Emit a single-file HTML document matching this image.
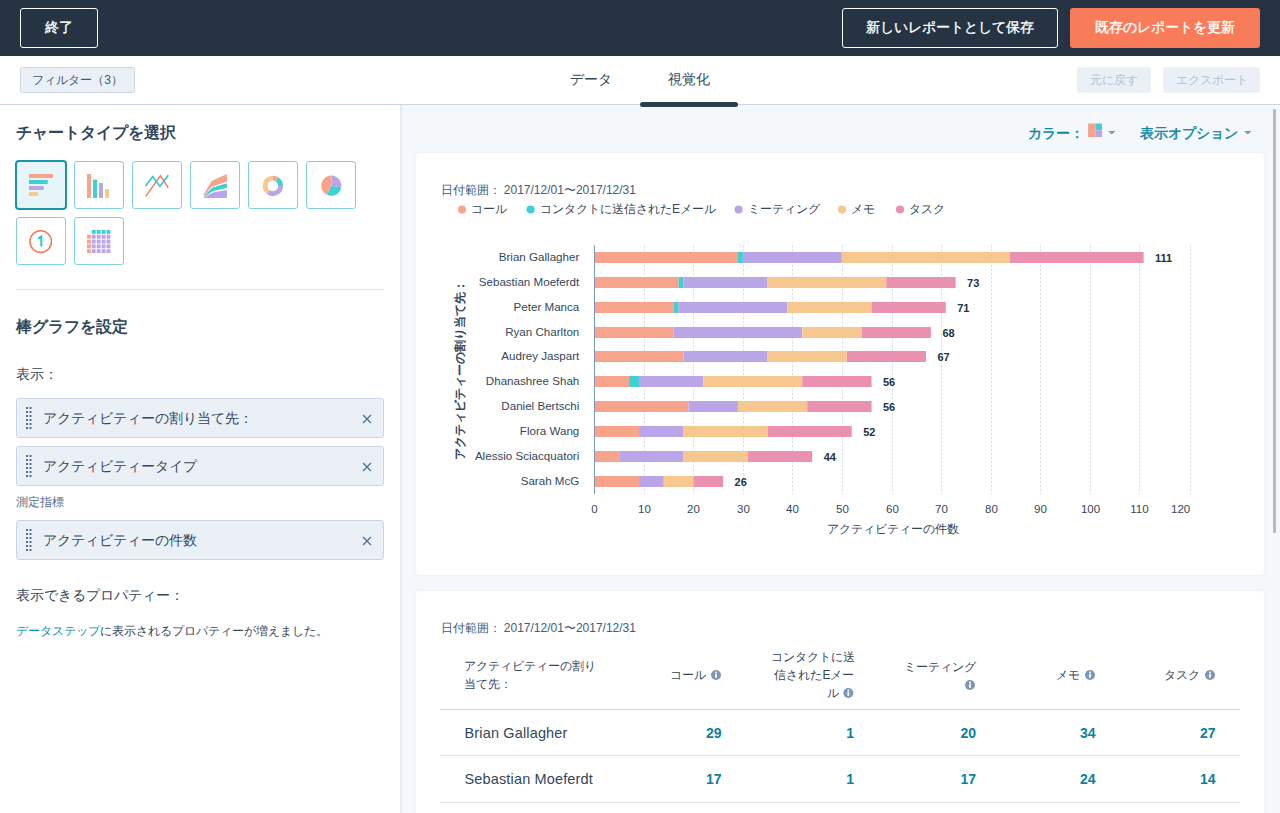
<!DOCTYPE html>
<html><head><meta charset="utf-8">
<style>
*{box-sizing:border-box;margin:0;padding:0}
html,body{width:1280px;height:813px;overflow:hidden;background:#f5f8fa;font-family:"Liberation Sans",sans-serif;color:#33475b}
.abs{position:absolute}
.t{position:absolute;white-space:nowrap;line-height:1}
#top{position:absolute;left:0;top:0;width:1280px;height:56px;background:#253342}
.btn{position:absolute;border-radius:3px;display:flex;align-items:center;justify-content:center;white-space:nowrap}
#sub{position:absolute;left:0;top:56px;width:1280px;height:49px;background:#fff;border-bottom:1px solid #cbd6e2}
#left{position:absolute;left:0;top:105px;width:400px;height:708px;background:#fff}
#lsh{position:absolute;left:400px;top:105px;width:3px;height:708px;background:linear-gradient(to right,#dfe5ec,#eef2f6 60%,#f5f8fa)}
.ct{position:absolute;width:50px;height:48px;border:1px solid #7fd1de;border-radius:3px;background:#fff}
.fld{position:absolute;left:16px;width:368px;height:40px;background:#eaf0f6;border:1px solid #cbd6e2;border-radius:3px}
.card{position:absolute;left:416px;width:848px;background:#fff;border-radius:4px;box-shadow:0 0 2px rgba(45,62,80,.08)}
</style></head><body>
<div id="top">
  <div class="btn" style="left:20px;top:8px;width:78px;height:40px;border:1px solid #fff;color:#fff;font-size:14px;-webkit-text-stroke:0.35px #fff">終了</div>
  <div class="btn" style="left:842px;top:8px;width:216px;height:40px;border:1px solid #fff;color:#fff;font-size:14px;-webkit-text-stroke:0.35px #fff">新しいレポートとして保存</div>
  <div class="btn" style="left:1070px;top:8px;width:190px;height:40px;background:#f87b5a;color:#fff;font-size:14px;-webkit-text-stroke:0.35px #fff">既存のレポートを更新</div>
</div>
<div id="sub">
  <div class="btn" style="left:20px;top:11px;width:115px;height:26px;background:#eaf0f6;border:1px solid #cbd6e2;color:#425b76;font-size:12px">フィルター（3）</div>
  <div class="t" style="left:550.5px;width:80px;text-align:center;top:16px;font-size:14px">データ</div>
  <div class="t" style="left:649px;width:80px;text-align:center;top:16px;font-size:14px">視覚化</div>
  <div class="abs" style="left:640px;top:46px;width:98px;height:5px;border-radius:3px;background:#2d3e50"></div>
  <div class="btn" style="left:1077px;top:11px;width:74px;height:26px;background:#eaf0f6;color:#b0c1d4;font-size:12px">元に戻す</div>
  <div class="btn" style="left:1163px;top:11px;width:97px;height:26px;background:#eaf0f6;color:#b0c1d4;font-size:12px">エクスポート</div>
</div>
<div id="lsh"></div>
<div id="left">
  <div class="t" style="left:16px;top:20px;font-size:16px;font-weight:bold">チャートタイプを選択</div>
  <!-- chart types -->
  <div class="ct" style="left:16px;top:56px;border:2px solid #1a93ad;border-radius:4px;background:#e5f5f8;left:15px;top:55px;width:52px;height:50px"></div>
  <div class="ct" style="left:74px;top:56px"></div>
  <div class="ct" style="left:132px;top:56px"></div>
  <div class="ct" style="left:190px;top:56px"></div>
  <div class="ct" style="left:248px;top:56px"></div>
  <div class="ct" style="left:306px;top:56px"></div>
  <div class="ct" style="left:16px;top:112px"></div>
  <div class="ct" style="left:74px;top:112px"></div>
  <div class="abs" style="left:16px;top:184px;width:368px;height:1px;background:#dfe3eb"></div>
  <div class="t" style="left:16px;top:214px;font-size:16px;font-weight:bold">棒グラフを設定</div>
  <div class="t" style="left:16px;top:262px;font-size:14px">表示：</div>
  <div class="fld" style="top:293px"><div class="t" style="left:26px;top:12px;font-size:14px">アクティビティーの割り当て先：</div></div>
  <div class="fld" style="top:341px"><div class="t" style="left:26px;top:12px;font-size:14px">アクティビティータイプ</div></div>
  <div class="t" style="left:16px;top:391px;font-size:12px;color:#516f90">測定指標</div>
  <div class="fld" style="top:415px"><div class="t" style="left:26px;top:12px;font-size:14px">アクティビティーの件数</div></div>
  <div class="t" style="left:16px;top:483px;font-size:14px">表示できるプロパティー：</div>
  <div class="t" style="left:16px;top:520px;font-size:12px"><span style="color:#0091ae">データステップ</span>に表示されるプロパティーが増えました。</div>
</div>
<svg class="abs" style="left:0;top:0;z-index:2" width="400" height="300"><rect x="29" y="174" width="24" height="4" fill="#f8a38b"/><rect x="29" y="180" width="18.7" height="4" fill="#3fd0d6"/><rect x="29" y="186" width="14.7" height="4" fill="#bba5e9"/><rect x="29" y="192" width="9" height="4" fill="#f6c78e"/><rect x="87" y="174" width="4" height="24" fill="#f8a38b"/><rect x="93" y="179.5" width="4" height="18.5" fill="#3fd0d6"/><rect x="99" y="183" width="4" height="15" fill="#bba5e9"/><rect x="105" y="189" width="4" height="9" fill="#f6c78e"/><polyline points="145.7,196.3 160.5,175.8 168.2,187.9" fill="none" stroke="#f5775a" stroke-width="1.4"/><polyline points="145.5,186 152.7,176.5 159.9,186.5 168.3,175.2" fill="none" stroke="#2fc6cf" stroke-width="1.6"/><path d="M203.5,194.5 L211.7,181 L226.9,174 L226.9,181.7 L212,186.6 L204,195.5 Z" fill="#f8a38b"/><path d="M204,196 L212.4,187.6 L226.9,183.3 L226.9,188 L213.1,191 L204,197 Z" fill="#3fd0d6"/><path d="M204,197.3 L213,192.5 L226.9,190 L226.9,198 L204,198 Z" fill="#bba5e9"/><g fill="none" stroke-width="4.8"><path d="M272.90,178.20 A7.7,7.7 0 0 1 276.98,179.37" stroke="#f8a38b"/><path d="M276.98,179.37 A7.7,7.7 0 0 1 280.60,185.90" stroke="#3fd0d6"/><path d="M280.60,185.90 A7.7,7.7 0 0 1 268.48,192.21" stroke="#bba5e9"/><path d="M268.48,192.21 A7.7,7.7 0 0 1 272.90,178.20" stroke="#f6c78e"/></g><path d="M331.3,185.7 L331.30,175.60 A10.1,10.1 0 0 1 341.25,187.45 Z" fill="#bba5e9"/><path d="M331.3,185.7 L341.25,187.45 A10.1,10.1 0 0 1 327.03,194.85 Z" fill="#3fd0d6"/><path d="M331.3,185.7 L327.03,194.85 A10.1,10.1 0 0 1 331.30,175.60 Z" fill="#f8a38b"/><circle cx="40.7" cy="241.6" r="10.8" fill="none" stroke="#f5775a" stroke-width="1.5"/><path d="M38.2,238.6 L41.3,236.6 L41.3,246.5" fill="none" stroke="#2ec4cf" stroke-width="2"/><rect x="91.8" y="230" width="3.9" height="3.9" fill="#3fd0d6"/><rect x="96.7" y="230" width="3.9" height="3.9" fill="#3fd0d6"/><rect x="101.6" y="230" width="3.9" height="3.9" fill="#3fd0d6"/><rect x="106.5" y="230" width="3.9" height="3.9" fill="#3fd0d6"/><rect x="87" y="234.8" width="3.9" height="3.9" fill="#f8a38b"/><rect x="91.8" y="234.8" width="3.9" height="3.9" fill="#bba5e9"/><rect x="96.7" y="234.8" width="3.9" height="3.9" fill="#bba5e9"/><rect x="101.6" y="234.8" width="3.9" height="3.9" fill="#bba5e9"/><rect x="106.5" y="234.8" width="3.9" height="3.9" fill="#bba5e9"/><rect x="87" y="239.6" width="3.9" height="3.9" fill="#f8a38b"/><rect x="91.8" y="239.6" width="3.9" height="3.9" fill="#bba5e9"/><rect x="96.7" y="239.6" width="3.9" height="3.9" fill="#bba5e9"/><rect x="101.6" y="239.6" width="3.9" height="3.9" fill="#bba5e9"/><rect x="106.5" y="239.6" width="3.9" height="3.9" fill="#bba5e9"/><rect x="87" y="244.4" width="3.9" height="3.9" fill="#f8a38b"/><rect x="91.8" y="244.4" width="3.9" height="3.9" fill="#bba5e9"/><rect x="96.7" y="244.4" width="3.9" height="3.9" fill="#bba5e9"/><rect x="101.6" y="244.4" width="3.9" height="3.9" fill="#bba5e9"/><rect x="106.5" y="244.4" width="3.9" height="3.9" fill="#bba5e9"/><rect x="87" y="249.2" width="3.9" height="3.9" fill="#f8a38b"/><rect x="91.8" y="249.2" width="3.9" height="3.9" fill="#bba5e9"/><rect x="96.7" y="249.2" width="3.9" height="3.9" fill="#bba5e9"/><rect x="101.6" y="249.2" width="3.9" height="3.9" fill="#bba5e9"/><rect x="106.5" y="249.2" width="3.9" height="3.9" fill="#bba5e9"/></svg>
<svg class="abs" style="left:0;top:0;z-index:2" width="400" height="813"><rect x="26" y="407" width="2" height="2" fill="#516f90"/><rect x="29.5" y="407" width="2" height="2" fill="#516f90"/><rect x="26" y="411" width="2" height="2" fill="#516f90"/><rect x="29.5" y="411" width="2" height="2" fill="#516f90"/><rect x="26" y="415" width="2" height="2" fill="#516f90"/><rect x="29.5" y="415" width="2" height="2" fill="#516f90"/><rect x="26" y="419" width="2" height="2" fill="#516f90"/><rect x="29.5" y="419" width="2" height="2" fill="#516f90"/><rect x="26" y="423" width="2" height="2" fill="#516f90"/><rect x="29.5" y="423" width="2" height="2" fill="#516f90"/><rect x="26" y="427" width="2" height="2" fill="#516f90"/><rect x="29.5" y="427" width="2" height="2" fill="#516f90"/><path d="M363,415 L371,423 M371,415 L363,423" stroke="#516f90" stroke-width="1.3"/><rect x="26" y="455" width="2" height="2" fill="#516f90"/><rect x="29.5" y="455" width="2" height="2" fill="#516f90"/><rect x="26" y="459" width="2" height="2" fill="#516f90"/><rect x="29.5" y="459" width="2" height="2" fill="#516f90"/><rect x="26" y="463" width="2" height="2" fill="#516f90"/><rect x="29.5" y="463" width="2" height="2" fill="#516f90"/><rect x="26" y="467" width="2" height="2" fill="#516f90"/><rect x="29.5" y="467" width="2" height="2" fill="#516f90"/><rect x="26" y="471" width="2" height="2" fill="#516f90"/><rect x="29.5" y="471" width="2" height="2" fill="#516f90"/><rect x="26" y="475" width="2" height="2" fill="#516f90"/><rect x="29.5" y="475" width="2" height="2" fill="#516f90"/><path d="M363,463 L371,471 M371,463 L363,471" stroke="#516f90" stroke-width="1.3"/><rect x="26" y="529" width="2" height="2" fill="#516f90"/><rect x="29.5" y="529" width="2" height="2" fill="#516f90"/><rect x="26" y="533" width="2" height="2" fill="#516f90"/><rect x="29.5" y="533" width="2" height="2" fill="#516f90"/><rect x="26" y="537" width="2" height="2" fill="#516f90"/><rect x="29.5" y="537" width="2" height="2" fill="#516f90"/><rect x="26" y="541" width="2" height="2" fill="#516f90"/><rect x="29.5" y="541" width="2" height="2" fill="#516f90"/><rect x="26" y="545" width="2" height="2" fill="#516f90"/><rect x="29.5" y="545" width="2" height="2" fill="#516f90"/><rect x="26" y="549" width="2" height="2" fill="#516f90"/><rect x="29.5" y="549" width="2" height="2" fill="#516f90"/><path d="M363,537 L371,545 M371,537 L363,545" stroke="#516f90" stroke-width="1.3"/></svg>
<div class="t" style="left:1028px;top:126px;font-size:14px;color:#0a87a2;-webkit-text-stroke:0.45px #0a87a2">カラー：</div>
<div class="t" style="left:1140px;top:126px;font-size:14px;color:#0a87a2;-webkit-text-stroke:0.45px #0a87a2">表示オプション</div>
<svg class="abs" style="left:1080px;top:118px" width="180" height="25">
<rect x="8" y="5.5" width="7.5" height="13.5" fill="#f8a38b"/><rect x="15.5" y="5.5" width="6.5" height="6.8" fill="#3fd0d6"/><rect x="15.5" y="12.3" width="6.5" height="6.7" fill="#bba5e9"/>
<path d="M28,13 L35.5,13 L31.75,16.5 Z" fill="#7c98b6"/>
<path d="M164,13 L171.5,13 L167.75,16.5 Z" fill="#7c98b6"/>
</svg>
<div class="card" style="top:153px;height:422px" id="card1"></div>
<div class="card" style="top:591px;height:240px" id="card2"></div>
<svg class="abs" style="left:0;top:0" width="1280" height="813" viewBox="0 0 1280 813">
<style>
.cat{font-size:11.6px;fill:#33475b}
.val{font-size:11px;font-weight:bold;fill:#213343}
.tick{font-size:11.5px;fill:#33475b}
.sm{font-size:12px;fill:#33475b}
.row{font-size:14.5px;letter-spacing:0.15px;fill:#33475b}
.num{font-size:14px;font-weight:bold;fill:#0a82a0}
</style>
<text x="440.5" y="194" class="sm" style="fill:#425b76">日付範囲： 2017/12/01〜2017/12/31</text>
<circle cx="462" cy="209.5" r="4.1" fill="#f8a38b"/><text x="471" y="212.5" class="sm">コール</text>
<circle cx="530.6" cy="209.5" r="4.1" fill="#3fd0d6"/><text x="540" y="212.5" class="sm">コンタクトに送信されたEメール</text>
<circle cx="738.6" cy="209.5" r="4.1" fill="#bba5e9"/><text x="748" y="212.5" class="sm">ミーティング</text>
<circle cx="842" cy="209.5" r="4.1" fill="#f6c78e"/><text x="851" y="212.5" class="sm">メモ</text>
<circle cx="900" cy="209.5" r="4.1" fill="#ea90b1"/><text x="909" y="212.5" class="sm">タスク</text>
<line x1="644.5" y1="245" x2="644.5" y2="494" stroke="#d9e2ec" stroke-width="1" stroke-dasharray="2.5,1.5"/>
<line x1="693.5" y1="245" x2="693.5" y2="494" stroke="#d9e2ec" stroke-width="1" stroke-dasharray="2.5,1.5"/>
<line x1="743.5" y1="245" x2="743.5" y2="494" stroke="#d9e2ec" stroke-width="1" stroke-dasharray="2.5,1.5"/>
<line x1="792.5" y1="245" x2="792.5" y2="494" stroke="#d9e2ec" stroke-width="1" stroke-dasharray="2.5,1.5"/>
<line x1="842.5" y1="245" x2="842.5" y2="494" stroke="#d9e2ec" stroke-width="1" stroke-dasharray="2.5,1.5"/>
<line x1="892.5" y1="245" x2="892.5" y2="494" stroke="#d9e2ec" stroke-width="1" stroke-dasharray="2.5,1.5"/>
<line x1="941.5" y1="245" x2="941.5" y2="494" stroke="#d9e2ec" stroke-width="1" stroke-dasharray="2.5,1.5"/>
<line x1="991.5" y1="245" x2="991.5" y2="494" stroke="#d9e2ec" stroke-width="1" stroke-dasharray="2.5,1.5"/>
<line x1="1040.5" y1="245" x2="1040.5" y2="494" stroke="#d9e2ec" stroke-width="1" stroke-dasharray="2.5,1.5"/>
<line x1="1090.5" y1="245" x2="1090.5" y2="494" stroke="#d9e2ec" stroke-width="1" stroke-dasharray="2.5,1.5"/>
<line x1="1139.5" y1="245" x2="1139.5" y2="494" stroke="#d9e2ec" stroke-width="1" stroke-dasharray="2.5,1.5"/>
<line x1="1190.5" y1="245" x2="1190.5" y2="494" stroke="#d9e2ec" stroke-width="1" stroke-dasharray="2.5,1.5"/>
<rect x="594.50" y="252.0" width="143.46" height="11" fill="#f8a38b"/>
<rect x="737.96" y="252.0" width="4.95" height="11" fill="#3fd0d6"/>
<rect x="742.91" y="252.0" width="98.94" height="11" fill="#bba5e9"/>
<rect x="841.85" y="252.0" width="168.20" height="11" fill="#f6c78e"/>
<rect x="1010.05" y="252.0" width="133.57" height="11" fill="#ea90b1"/>
<text x="579.3" y="261.1" text-anchor="end" class="cat">Brian Gallagher</text>
<text x="1155.1" y="261.5" class="val">111</text>
<rect x="594.50" y="277.0" width="84.10" height="11" fill="#f8a38b"/>
<rect x="678.60" y="277.0" width="4.95" height="11" fill="#3fd0d6"/>
<rect x="683.55" y="277.0" width="84.10" height="11" fill="#bba5e9"/>
<rect x="767.64" y="277.0" width="118.73" height="11" fill="#f6c78e"/>
<rect x="886.37" y="277.0" width="69.26" height="11" fill="#ea90b1"/>
<text x="579.3" y="286.1" text-anchor="end" class="cat">Sebastian Moeferdt</text>
<text x="967.1" y="286.5" class="val">73</text>
<rect x="594.50" y="302.0" width="79.15" height="11" fill="#f8a38b"/>
<rect x="673.65" y="302.0" width="4.95" height="11" fill="#3fd0d6"/>
<rect x="678.60" y="302.0" width="108.83" height="11" fill="#bba5e9"/>
<rect x="787.43" y="302.0" width="84.10" height="11" fill="#f6c78e"/>
<rect x="871.53" y="302.0" width="74.21" height="11" fill="#ea90b1"/>
<text x="579.3" y="311.1" text-anchor="end" class="cat">Peter Manca</text>
<text x="957.2" y="311.5" class="val">71</text>
<rect x="594.50" y="327.0" width="79.15" height="11" fill="#f8a38b"/>
<rect x="673.65" y="327.0" width="128.62" height="11" fill="#bba5e9"/>
<rect x="802.27" y="327.0" width="59.36" height="11" fill="#f6c78e"/>
<rect x="861.64" y="327.0" width="69.26" height="11" fill="#ea90b1"/>
<text x="579.3" y="336.1" text-anchor="end" class="cat">Ryan Charlton</text>
<text x="942.4" y="336.5" class="val">68</text>
<rect x="594.50" y="351.0" width="89.05" height="11" fill="#f8a38b"/>
<rect x="683.55" y="351.0" width="84.10" height="11" fill="#bba5e9"/>
<rect x="767.64" y="351.0" width="79.15" height="11" fill="#f6c78e"/>
<rect x="846.80" y="351.0" width="79.15" height="11" fill="#ea90b1"/>
<text x="579.3" y="360.1" text-anchor="end" class="cat">Audrey Jaspart</text>
<text x="937.4" y="360.5" class="val">67</text>
<rect x="594.50" y="376.0" width="34.63" height="11" fill="#f8a38b"/>
<rect x="629.13" y="376.0" width="9.89" height="11" fill="#3fd0d6"/>
<rect x="639.02" y="376.0" width="64.31" height="11" fill="#bba5e9"/>
<rect x="703.33" y="376.0" width="98.94" height="11" fill="#f6c78e"/>
<rect x="802.27" y="376.0" width="69.26" height="11" fill="#ea90b1"/>
<text x="579.3" y="385.1" text-anchor="end" class="cat">Dhanashree Shah</text>
<text x="883.0" y="385.5" class="val">56</text>
<rect x="594.50" y="401.0" width="93.99" height="11" fill="#f8a38b"/>
<rect x="688.49" y="401.0" width="49.47" height="11" fill="#bba5e9"/>
<rect x="737.96" y="401.0" width="69.26" height="11" fill="#f6c78e"/>
<rect x="807.22" y="401.0" width="64.31" height="11" fill="#ea90b1"/>
<text x="579.3" y="410.1" text-anchor="end" class="cat">Daniel Bertschi</text>
<text x="883.0" y="410.5" class="val">56</text>
<rect x="594.50" y="426.0" width="44.52" height="11" fill="#f8a38b"/>
<rect x="639.02" y="426.0" width="44.52" height="11" fill="#bba5e9"/>
<rect x="683.55" y="426.0" width="84.10" height="11" fill="#f6c78e"/>
<rect x="767.64" y="426.0" width="84.10" height="11" fill="#ea90b1"/>
<text x="579.3" y="435.1" text-anchor="end" class="cat">Flora Wang</text>
<text x="863.2" y="435.5" class="val">52</text>
<rect x="594.50" y="451.0" width="24.74" height="11" fill="#f8a38b"/>
<rect x="619.24" y="451.0" width="64.31" height="11" fill="#bba5e9"/>
<rect x="683.55" y="451.0" width="64.31" height="11" fill="#f6c78e"/>
<rect x="747.86" y="451.0" width="64.31" height="11" fill="#ea90b1"/>
<text x="579.3" y="460.1" text-anchor="end" class="cat">Alessio Sciacquatori</text>
<text x="823.7" y="460.5" class="val">44</text>
<rect x="594.50" y="476.0" width="44.52" height="11" fill="#f8a38b"/>
<rect x="639.02" y="476.0" width="24.74" height="11" fill="#bba5e9"/>
<rect x="663.76" y="476.0" width="29.68" height="11" fill="#f6c78e"/>
<rect x="693.44" y="476.0" width="29.68" height="11" fill="#ea90b1"/>
<text x="579.3" y="485.1" text-anchor="end" class="cat">Sarah McG</text>
<text x="734.6" y="485.5" class="val">26</text>
<line x1="594.5" y1="245" x2="594.5" y2="494" stroke="#7c98b6" stroke-width="1"/>
<text x="594.5" y="513" text-anchor="middle" class="tick">0</text>
<text x="644.5" y="513" text-anchor="middle" class="tick">10</text>
<text x="693.5" y="513" text-anchor="middle" class="tick">20</text>
<text x="743.5" y="513" text-anchor="middle" class="tick">30</text>
<text x="792.5" y="513" text-anchor="middle" class="tick">40</text>
<text x="842.5" y="513" text-anchor="middle" class="tick">50</text>
<text x="892.5" y="513" text-anchor="middle" class="tick">60</text>
<text x="941.5" y="513" text-anchor="middle" class="tick">70</text>
<text x="991.5" y="513" text-anchor="middle" class="tick">80</text>
<text x="1040.5" y="513" text-anchor="middle" class="tick">90</text>
<text x="1090.5" y="513" text-anchor="middle" class="tick">100</text>
<text x="1139.5" y="513" text-anchor="middle" class="tick">110</text>
<text x="1180.6" y="513" text-anchor="middle" class="tick">120</text>
<text x="893" y="533" text-anchor="middle" class="sm">アクティビティーの件数</text>
<text transform="translate(463.5,369.5) rotate(-90)" text-anchor="middle" class="sm" style="font-weight:bold;fill:#33475b">アクティビティーの割り当て先：</text>
<text x="440.5" y="632" class="sm" style="fill:#425b76">日付範囲： 2017/12/01〜2017/12/31</text>
<text x="464" y="669.8" class="sm">アクティビティーの割り</text>
<text x="464" y="688" class="sm">当て先：</text>
<text x="706" y="678.5" text-anchor="end" class="sm">コール</text><g transform="translate(716,675)"><circle r="5" fill="#7c98b6"/><rect x="-0.9" y="-1" width="1.8" height="3.8" fill="#fff"/><circle cy="-2.6" r="1" fill="#fff"/></g>
<text x="854.5" y="661" text-anchor="end" class="sm">コンタクトに送</text>
<text x="854.5" y="679" text-anchor="end" class="sm">信されたEメー</text>
<text x="839" y="696.5" text-anchor="end" class="sm">ル</text><g transform="translate(848.3,693)"><circle r="5" fill="#7c98b6"/><rect x="-0.9" y="-1" width="1.8" height="3.8" fill="#fff"/><circle cy="-2.6" r="1" fill="#fff"/></g>
<text x="976" y="671.3" text-anchor="end" class="sm">ミーティング</text><g transform="translate(970,685)"><circle r="5" fill="#7c98b6"/><rect x="-0.9" y="-1" width="1.8" height="3.8" fill="#fff"/><circle cy="-2.6" r="1" fill="#fff"/></g>
<text x="1080" y="678.5" text-anchor="end" class="sm">メモ</text><g transform="translate(1090,675)"><circle r="5" fill="#7c98b6"/><rect x="-0.9" y="-1" width="1.8" height="3.8" fill="#fff"/><circle cy="-2.6" r="1" fill="#fff"/></g>
<text x="1200" y="678.5" text-anchor="end" class="sm">タスク</text><g transform="translate(1210,675)"><circle r="5" fill="#7c98b6"/><rect x="-0.9" y="-1" width="1.8" height="3.8" fill="#fff"/><circle cy="-2.6" r="1" fill="#fff"/></g>
<rect x="440" y="709" width="800" height="1" fill="#cbd6e2"/>
<text x="464.5" y="738" class="row">Brian Gallagher</text>
<text x="721.5" y="738" text-anchor="end" class="num">29</text>
<text x="854" y="738" text-anchor="end" class="num">1</text>
<text x="976" y="738" text-anchor="end" class="num">20</text>
<text x="1095.5" y="738" text-anchor="end" class="num">34</text>
<text x="1215.5" y="738" text-anchor="end" class="num">27</text>
<rect x="440" y="755" width="800" height="1" fill="#dfe3eb"/>
<text x="464.5" y="784" class="row">Sebastian Moeferdt</text>
<text x="721.5" y="784" text-anchor="end" class="num">17</text>
<text x="854" y="784" text-anchor="end" class="num">1</text>
<text x="976" y="784" text-anchor="end" class="num">17</text>
<text x="1095.5" y="784" text-anchor="end" class="num">24</text>
<text x="1215.5" y="784" text-anchor="end" class="num">14</text>
<rect x="440" y="802" width="800" height="1" fill="#dfe3eb"/>
</svg>
<!--SVGEND-->
<div class="abs" style="left:1273px;top:109px;width:3px;height:424px;background:#bababa;border-radius:1px"></div>
</body></html>
